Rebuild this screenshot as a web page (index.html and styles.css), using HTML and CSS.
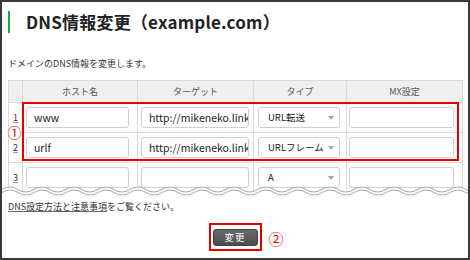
FILE: index.html
```html
<!DOCTYPE html>
<html lang="ja">
<head>
<meta charset="utf-8">
<title>DNS情報変更</title>
<link rel="stylesheet" href="styles.css">
</head>
<body>
<div class="frame">
  <h1 class="title">DNS情報変更（example.com）</h1>
  <p class="lead">ドメインのDNS情報を変更します。</p>
  <div class="table-wrap">
    <table class="dns">
      <colgroup>
        <col class="c-num"><col class="c-host"><col class="c-target"><col class="c-type"><col class="c-mx">
      </colgroup>
      <thead>
        <tr><th></th><th>ホスト名</th><th>ターゲット</th><th>タイプ</th><th>MX設定</th></tr>
      </thead>
      <tbody>
        <tr>
          <td class="num"><span>1</span></td>
          <td class="cell-host"><input class="field host" type="text" value="www"></td>
          <td class="cell-target"><input class="field target" type="text" value="http://mikeneko.link"></td>
          <td class="cell-type"><div class="field select"><span class="select-text">URL転送</span><i class="arrow"></i></div></td>
          <td class="cell-mx"><input class="field mx" type="text" value=""></td>
        </tr>
        <tr>
          <td class="num"><span>2</span></td>
          <td class="cell-host"><input class="field host" type="text" value="urlf"></td>
          <td class="cell-target"><input class="field target" type="text" value="http://mikeneko.link"></td>
          <td class="cell-type"><div class="field select"><span class="select-text">URLフレーム</span><i class="arrow"></i></div></td>
          <td class="cell-mx"><input class="field mx" type="text" value=""></td>
        </tr>
        <tr>
          <td class="num"><span>3</span></td>
          <td class="cell-host"><input class="field host" type="text" value=""></td>
          <td class="cell-target"><input class="field target" type="text" value=""></td>
          <td class="cell-type"><div class="field select"><span class="select-text">A</span><i class="arrow"></i></div></td>
          <td class="cell-mx"><input class="field mx" type="text" value=""></td>
        </tr>
      </tbody>
    </table>
    <div class="mark-box rows"></div>
    <span class="mark-num one">①</span>
    <svg class="wave" width="466" height="12" viewBox="0 0 466 12">
      <path class="wave-fill" d="M0,4.5 q8,-5 16,0 t16,0 t16,0 t16,0 t16,0 t16,0 t16,0 t16,0 t16,0 t16,0 t16,0 t16,0 t16,0 t16,0 t16,0 t16,0 t16,0 t16,0 t16,0 t16,0 t16,0 t16,0 t16,0 t16,0 t16,0 t16,0 t16,0 t16,0 t16,0 t16,0 L480,12 L0,12 Z"/>
      <path class="wave-line" d="M0,4.5 q8,-5 16,0 t16,0 t16,0 t16,0 t16,0 t16,0 t16,0 t16,0 t16,0 t16,0 t16,0 t16,0 t16,0 t16,0 t16,0 t16,0 t16,0 t16,0 t16,0 t16,0 t16,0 t16,0 t16,0 t16,0 t16,0 t16,0 t16,0 t16,0 t16,0 t16,0"/>
      <path class="wave-line" d="M0,7.5 q8,-5 16,0 t16,0 t16,0 t16,0 t16,0 t16,0 t16,0 t16,0 t16,0 t16,0 t16,0 t16,0 t16,0 t16,0 t16,0 t16,0 t16,0 t16,0 t16,0 t16,0 t16,0 t16,0 t16,0 t16,0 t16,0 t16,0 t16,0 t16,0 t16,0 t16,0"/>
    </svg>
  </div>
  <p class="note"><a class="note-link" href="#">DNS設定方法と注意事項</a>をご覧ください。</p>
  <div class="actions">
    <div class="mark-box btn-box">
      <button class="btn" type="button">変更</button>
      <span class="mark-num two">②</span>
    </div>
  </div>
</div>
</body>
</html>
```

FILE: styles.css
```css
* { box-sizing: border-box; }

html, body {
  margin: 0;
  padding: 0;
  background: #fff;
}

body {
  font-family: "Noto Sans CJK JP", "Noto Sans", sans-serif;
  color: #333;
}

.frame {
  width: 470px;
  height: 260px;
  border: 2px solid #3a3a3a;
  padding: 0 6px;
  overflow: hidden;
  display: flex;
  flex-direction: column;
}

.title {
  margin: 9px 0 0;
  height: 22px;
  border-left: 2px solid #1aaa2e;
  padding-left: 16px;
  font-size: 17px;
  line-height: 22px;
  font-weight: bold;
  color: #222;
  letter-spacing: 0.2px;
}

.lead {
  margin: 24px 0 0;
  font-size: 9px;
  line-height: 14px;
  color: #333;
}

.table-wrap {
  position: relative;
  margin: 9px -6px 0;
  padding: 0 6px;
  height: 117px;
  overflow: hidden;
}

.dns {
  border-collapse: collapse;
  table-layout: fixed;
  width: 454px;
}

.c-num { width: 14px; }
.c-host { width: 115px; }
.c-target { width: 116px; }
.c-type { width: 93px; }
.c-mx { width: 116px; }

.dns th,
.dns td {
  border: 1px solid #dadada;
  padding: 0;
}

.dns th {
  height: 22px;
  background: #efefef;
  font-size: 9px;
  font-weight: normal;
  color: #555;
  text-align: center;
}

.dns td {
  height: 30px;
  background: #fff;
  vertical-align: middle;
}

.dns td.num {
  text-align: center;
  font-size: 9px;
  line-height: 10px;
  color: #333;
}

.num span {
  text-decoration: underline;
  text-decoration-color: #999;
}

.cell-host { padding-left: 3px !important; }
.cell-target { padding-left: 3px !important; }
.cell-type { padding-left: 4px !important; }
.cell-mx { padding-left: 2px !important; }

.field {
  display: block;
  height: 21px;
  border: 1px solid #cfcfcf;
  border-radius: 3px;
  background: #fff;
  font-family: "Noto Sans CJK JP", "Noto Sans", sans-serif;
  font-size: 10.5px;
  color: #222;
  padding: 0 0 0 7px;
  margin: 0;
  outline: none;
}

.field.host { width: 103px; }
.field.target { width: 108px; }
.field.mx { width: 105px; }

.field.select {
  width: 82px;
  display: flex;
  align-items: center;
  padding: 0 5px 0 9px;
  font-size: 9.5px;
  line-height: 1;
  white-space: nowrap;
}

.select-text {
  margin-right: auto;
}

.arrow {
  flex: none;
  width: 0;
  height: 0;
  margin-left: 3px;
  border-left: 3px solid transparent;
  border-right: 3px solid transparent;
  border-top: 4px solid #a5a5a5;
}

.mark-box {
  border: 2px solid #e60000;
}

.mark-box.rows {
  position: absolute;
  left: 20px;
  top: 22px;
  width: 437px;
  height: 59px;
}

.mark-num {
  position: absolute;
  color: #e60000;
  font-size: 14px;
  line-height: 13px;
  width: 13px;
  height: 13px;
  display: flex;
  align-items: center;
  justify-content: center;
  background: #fff;
  border-radius: 50%;
}

.mark-num.one {
  left: 6px;
  top: 46px;
}

.wave {
  position: absolute;
  left: 0;
  top: 105px;
  display: block;
}

.wave-fill {
  fill: #fff;
  stroke: none;
}

.wave-line {
  fill: none;
  stroke: #a8a8a8;
  stroke-width: 1;
}

.note {
  margin: 3px 0 0;
  font-size: 9px;
  line-height: 14px;
  color: #333;
}

.note-link {
  color: #333;
  text-decoration: underline;
  text-decoration-color: #666;
}

.actions {
  margin-top: 9px;
  display: flex;
  justify-content: center;
}

.btn-box {
  position: relative;
  display: flex;
  padding: 4px 2px 3px;
}

.btn {
  width: 45px;
  height: 17px;
  margin: 0;
  padding: 0;
  border: 1px solid #3f3f3f;
  border-radius: 3px;
  background: linear-gradient(#6a6a6a, #4c4c4c);
  color: #fff;
  font-family: "Noto Sans CJK JP", sans-serif;
  font-size: 9.5px;
  line-height: 15px;
  letter-spacing: 1px;
}

.mark-num.two {
  left: calc(100% + 9px);
  top: 6px;
  font-size: 15px;
  width: 15px;
  height: 15px;
  line-height: 15px;
  background: transparent;
}
```
